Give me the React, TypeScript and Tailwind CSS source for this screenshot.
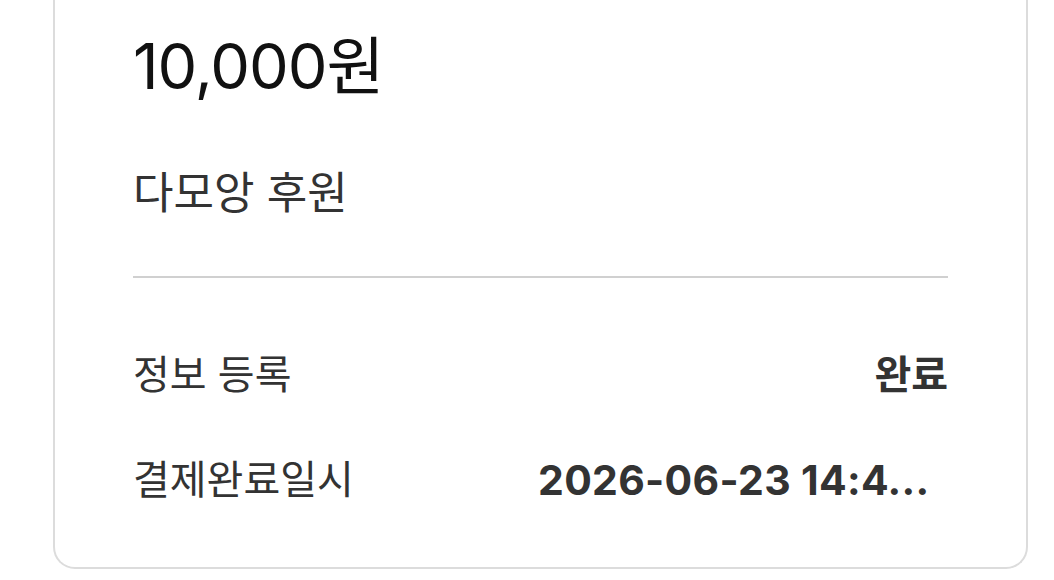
import React from 'react';

type Row = { label: string; value: string; wide?: boolean };

const rows: Row[] = [
  { label: '정보 등록', value: '완료' },
  { label: '결제완료일시', value: '2026-06-23 14:4...', wide: true },
];

export default function App() {
  return (
    <div className="min-h-[580px] w-full bg-white font-[Inter,'Noto_Sans_CJK_KR',sans-serif]">
      <div className="ml-[53px] w-[975px] rounded-b-[22px] border-2 border-t-0 border-[#dcdcdc] px-[78px] pb-[59px] pt-[28px]">
        {/* 결제 금액 */}
        <div className="text-[63px] leading-[76px] tracking-[-1px] text-[#111]">10,000원</div>
        <div className="mt-[61px] text-[44px] leading-[56px] text-[#333]">다모앙 후원</div>

        <div className="mt-[55px] h-[2px] bg-[#d0d0d0]" />

        {rows.map((row, i) => (
          <div
            key={row.label}
            className={`flex items-center justify-between ${i === 0 ? 'mt-[69px]' : 'mt-[49px]'}`}
          >
            <span className="text-[40px] leading-[56px] text-[#333]">{row.label}</span>
            <span
              className={`whitespace-nowrap font-bold leading-[56px] text-[#333] ${
                row.wide ? 'w-[410px] text-left text-[41px] tracking-[0.3px]' : 'text-right text-[40px]'
              }`}
            >
              {row.value}
            </span>
          </div>
        ))}
      </div>
    </div>
  );
}
